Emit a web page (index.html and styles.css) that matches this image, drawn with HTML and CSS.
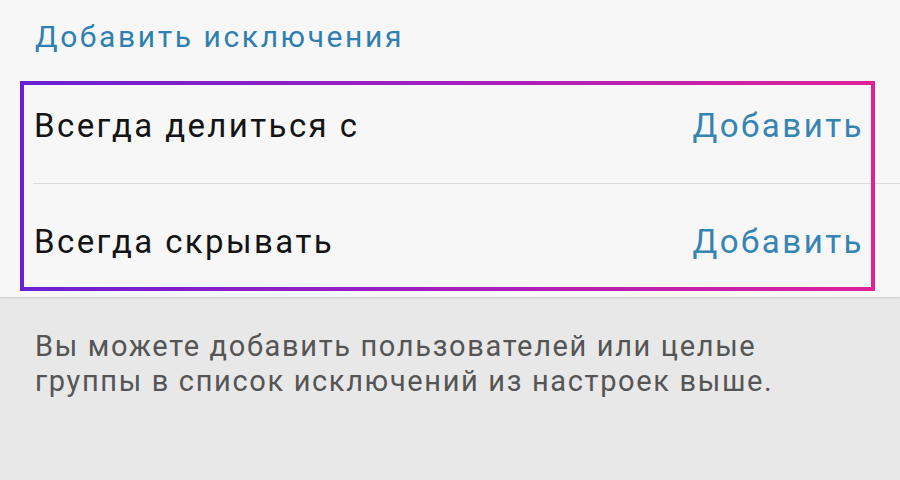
FILE: index.html
```html
<!DOCTYPE html>
<html lang="ru">
<head>
  <meta charset="UTF-8" />
  <meta name="viewport" content="width=device-width, initial-scale=1" />
  <title>Исключения</title>
  <link rel="stylesheet" href="styles.css">
</head>
<body>
  <div class="screen">
    <div class="settings">
      <div class="section-title">Добавить исключения</div>
      <div class="list">
        <div class="row">
          <span class="row-label">Всегда делиться с</span>
          <span class="row-action">Добавить</span>
        </div>
        <div class="row">
          <span class="row-label">Всегда скрывать</span>
          <span class="row-action">Добавить</span>
        </div>
      </div>
    </div>

    <div class="note">
      Вы можете добавить пользователей или целые<br />группы в список исключений из настроек выше.
    </div>

    <!-- highlight frame drawn over the list -->
    <div class="highlight"></div>
  </div>
</body>
</html>
```

FILE: styles.css
```css
html, body {
  margin: 0;
  padding: 0;
}
body {
  font-family: Roboto, "Noto Sans", sans-serif;
  background: #e8e8e8;
}
.screen {
  position: relative;
  width: 900px;
  height: 480px;
  display: flex;
  flex-direction: column;
  overflow: hidden;
}
.settings {
  background: #f7f7f7;
  height: 297px;
  box-shadow: 0 1px 2px rgba(0,0,0,0.12);
}
.section-title {
  height: 68px;
  padding-left: 35px;
  font-size: 30px;
  letter-spacing: 2.6px;
  line-height: 74px;
  color: #2f80b0;
}
.row {
  display: flex;
  align-items: center;
  justify-content: space-between;
  height: 115px;
  padding: 0 36px 0 34px;
}
.row + .row {
  height: 114px;
  margin-left: 33px;
  padding-left: 1px;
  border-top: 1px solid #dcdcdc;
}
.row-label {
  font-size: 33px;
  letter-spacing: 2.4px;
  color: #141414;
}
.row-action {
  font-size: 33px;
  letter-spacing: 2.5px;
  color: #3684b2;
}
.note {
  flex: 1;
  padding: 32px 36px 0 35px;
  font-size: 29px;
  letter-spacing: 1.65px;
  line-height: 35px;
  color: #555;
}
.highlight {
  position: absolute;
  left: 20px;
  top: 81px;
  width: 855px;
  height: 210px;
  box-sizing: border-box;
  border: 4px solid;
  border-image: linear-gradient(90deg, #6a20d4, #a41fc0 50%, #e0229a) 1;
}
```
